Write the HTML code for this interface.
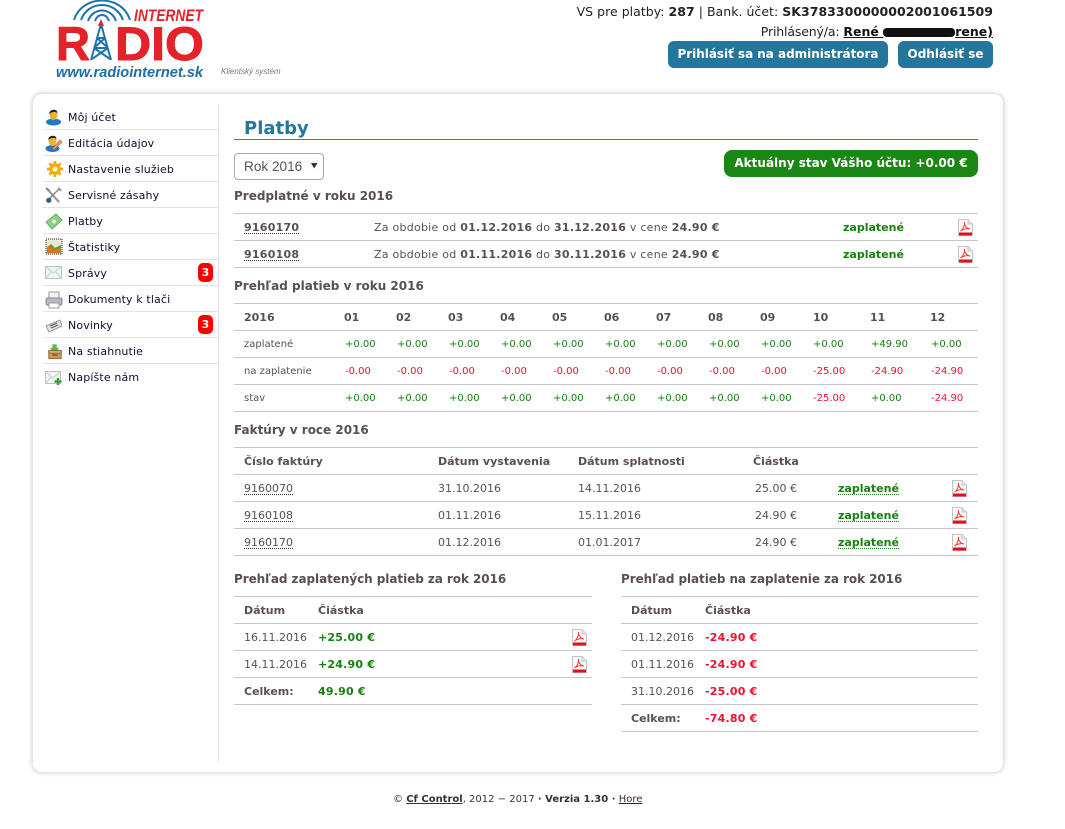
<!DOCTYPE html>
<html lang="sk"><head><meta charset="utf-8"><title>Platby</title>
<style>
html,body{margin:0;padding:0;background:#fff}
body{width:1065px;height:829px;position:relative;overflow:hidden;font-family:"DejaVu Sans","Liberation Sans",sans-serif;font-size:11px;color:#5a5050}
.t{position:absolute;white-space:nowrap;line-height:16px;margin-top:1px}
.b{font-weight:bold}
.l{position:absolute;height:1px;background:#c6c6c6}
.m{position:absolute;left:43px;width:175px;height:1px;background:#e2e2e2}
.n{color:#140a33;left:68px;letter-spacing:.13px}
.g{color:#16800f}.r{color:#f01030}
.h{font-weight:bold;font-size:12px;color:#5a5050;left:234px}
.s{font-size:10px}
.d{border-bottom:1px dotted #333;line-height:16px;height:13px;margin-top:0}
.w{letter-spacing:.25px}
.a{letter-spacing:.2px}
.ic{position:absolute;width:18px;height:18px}
.p{position:absolute;width:15px;height:17px;margin-top:1px}
.bd{position:absolute;left:198px;width:15px;height:19px;border-radius:5px;background:#f00;color:#fff;font-weight:bold;font-size:11px;text-align:center;line-height:19px}
.btn{position:absolute;top:41px;height:27px;background:#23769c;border-radius:6px;color:#fff;font-weight:bold;font-size:12px;text-align:center;line-height:27px}
</style></head><body>
<svg width="0" height="0" style="position:absolute"><defs>
<symbol id="pdf" viewBox="0 0 15 17"><path d="M.5 .5H10L14.500 5V16.500H.5Z" fill="#fafafa" stroke="#c4c4c4"/><path d="M10 .5V5H14.500" fill="#e4e4e4" stroke="#c4c4c4"/><rect x="1" y="13.500" width="13" height="3" fill="#e2101a"/><path d="M2.500 12C5 10.500 7 6 6.500 3C6 6 8.500 9.500 12 10C9 9 5 10 2.500 12Z" fill="none" stroke="#e8402f" stroke-width="1"/></symbol>
</defs></svg>

<!-- logo -->
<svg style="position:absolute;left:50px;top:0" width="170" height="84" viewBox="0 0 170 84">
<g fill="none" stroke="#1f74a8" stroke-width="2"><path d="M24 20C32-6 72-6 80 20"/><path d="M31 20C38 0 66 0 73 20"/><path d="M38 21C43 7 61 7 66 21"/><path d="M45 21C48 13 56 13 59 21"/></g>
<text x="84" y="21" font-family="Liberation Sans" font-size="16.500" font-weight="bold" font-style="italic" fill="#e42229" textLength="69" lengthAdjust="spacingAndGlyphs">INTERNET</text>
<text x="6" y="60" font-family="Liberation Sans" font-size="47" font-weight="bold" fill="#e42229" stroke="#e42229" stroke-width=".9" textLength="34" lengthAdjust="spacingAndGlyphs">R</text>
<text x="65" y="60" font-family="Liberation Sans" font-size="47" font-weight="bold" fill="#e42229" stroke="#e42229" stroke-width=".9" textLength="89" lengthAdjust="spacingAndGlyphs">DIO</text>
<g fill="none" stroke="#1f74a8" stroke-width="2"><path d="M51 24L41 60M51 24L61 60M47 38H55M44 48H58M47 38L58 48M55 38L44 48M42 59L58 48M60 59L44 48"/></g>
<path d="M51 19L48 26H54Z" fill="#e42229"/>
<text x="6" y="77" font-family="Liberation Sans" font-size="15" font-weight="bold" font-style="italic" fill="#1f6da3" textLength="147" lengthAdjust="spacingAndGlyphs">www.radiointernet.sk</text>
</svg>
<div class="t" style="left:221px;top:63px;font:italic 8px/16px 'Liberation Sans',sans-serif;color:#777">Klientský systém</div>

<!-- header -->
<div class="t" style="right:72px;top:3px;font-size:12.500px;color:#222;letter-spacing:.03px">VS pre platby: <b>287</b> | Bank. účet: <b>SK3783300000002001061509</b></div>
<div class="t" style="right:72px;top:23px;font-size:12.500px;color:#222"><span style="letter-spacing:-.15px">Prihlásený/a:</span> <b style="text-decoration:underline;color:#111">René&nbsp;<span style="display:inline-block;width:72px;height:9px;background:#111;border-radius:4px;vertical-align:-1px"></span>rene)</b></div>
<div class="btn" style="left:668px;width:220px;letter-spacing:-.03px">Prihlásiť sa na administrátora</div>
<div class="btn" style="left:898px;width:95px">Odhlásiť se</div>

<!-- card -->
<div style="position:absolute;left:33px;top:94px;width:970px;height:678px;background:#fff;border-radius:9px;box-shadow:0 0 5px 1px #cfcfcf"></div>
<div style="position:absolute;left:218px;top:104px;width:1px;height:658px;background:#e2e2e2"></div>

<!-- side menu -->
<div class="m" style="top:129px"></div><div class="m" style="top:155px"></div><div class="m" style="top:181px"></div><div class="m" style="top:207px"></div><div class="m" style="top:233px"></div><div class="m" style="top:259px"></div><div class="m" style="top:285px"></div><div class="m" style="top:311px"></div><div class="m" style="top:337px"></div><div class="m" style="top:363px"></div>

<svg class="ic" style="left:45px;top:108px" viewBox="0 0 18 18"><ellipse cx="8.500" cy="14" rx="7.500" ry="3.500" fill="#1f78c8"/><path d="M4.500 6C4.500 1 12.500 1 12.500 6C12.500 10 10.500 12 8.500 12C6.500 12 4.500 10 4.500 6Z" fill="#f0b030"/><path d="M4.500 6C3.500 1 12.500 0 12.500 5C9.500 3 6.500 4 4.500 6Z" fill="#222"/></svg>
<svg class="ic" style="left:45px;top:134px" viewBox="0 0 18 18"><ellipse cx="7.500" cy="14.500" rx="7" ry="3.500" fill="#1f78c8"/><path d="M3.500 6C3.500 1 11.500 1 11.500 6C11.500 10 9.500 12 7.500 12C5.500 12 3.500 10 3.500 6Z" fill="#f0b030"/><path d="M3.500 6C2.500 1 11.500 0 11.500 5C8.500 3 5.500 4 3.500 6Z" fill="#222"/><path d="M7 15L15 6L17 8L9 16Z" fill="#e8a060" stroke="#a86028" stroke-width=".6"/></svg>
<svg class="ic" style="left:46px;top:160px" viewBox="0 0 18 18"><circle cx="9" cy="9" r="4.200" fill="none" stroke="#f4a90c" stroke-width="3"/><path d="M9 1V17M1 9H17M3.400 3.400L14.600 14.600M14.600 3.400L3.400 14.600" stroke="#f4a90c" stroke-width="2.800"/><circle cx="9" cy="9" r="2.600" fill="#fff2c0"/></svg>
<svg class="ic" style="left:45px;top:187px;width:17px;height:17px" viewBox="0 0 18 18"><path d="M2 2L15 16" stroke="#999" stroke-width="2.200"/><path d="M15 2L4 13" stroke="#888" stroke-width="1.600"/><circle cx="4" cy="14" r="2.800" fill="#33608c"/><path d="M1 1L5 4M14 1L17 4" stroke="#888" stroke-width="1.800"/></svg>
<svg class="ic" style="left:45px;top:213px" viewBox="0 0 18 18"><path d="M1 9L11 1L17 7L7 16Z" fill="#8ccf88" stroke="#66ad62"/><circle cx="9" cy="8.500" r="2" fill="#d4f0cc"/></svg>
<svg class="ic" style="left:45px;top:238px" viewBox="0 0 18 18"><rect x="1" y="1" width="16" height="15" fill="#e8e8d8" stroke="#222" stroke-dasharray="1 1"/><path d="M2 15V9L6 6L10 10L16 7V15Z" fill="#d87818"/><path d="M6 6L10 10L16 7V10L10 12L5 9Z" fill="#6a9a30"/></svg>
<svg class="ic" style="left:45px;top:265px;height:16px" viewBox="0 0 18 16"><rect x=".5" y="1.500" width="16" height="12" fill="#f0f4f4" stroke="#bcc4c4"/><path d="M1 2L8.500 8L16 2M1 13L6 7M16 13L11 7" fill="none" stroke="#c4cccc"/></svg>
<svg class="ic" style="left:45px;top:291px" viewBox="0 0 18 18"><rect x="4" y="1" width="10" height="7" fill="#f4f4f4" stroke="#999"/><rect x="1" y="7" width="16" height="7" rx="1.500" fill="#b4bac4" stroke="#888"/><rect x="4" y="12" width="10" height="5" fill="#fff" stroke="#999"/></svg>
<svg class="ic" style="left:45px;top:318px;height:16px" viewBox="0 0 18 16"><path d="M1 8L15 2L17 8L4 14Z" fill="#e4e4e4" stroke="#999"/><path d="M5 8L12 5M6 10L13 7" stroke="#555" stroke-width="1.200"/></svg>
<svg class="ic" style="left:47px;top:343px;width:16px;height:17px" viewBox="0 0 18 18"><path d="M6 1H11V5H14L8.500 10L3 5H6Z" fill="#5cb848"/><rect x="2" y="8" width="14" height="9" fill="#cf9a5c" stroke="#8a6434"/><rect x="2" y="8" width="14" height="3" fill="#dcae74" stroke="#8a6434"/><rect x="6" y="12" width="6" height="2" fill="#8a6434"/></svg>
<svg class="ic" style="left:45px;top:370px;height:16px" viewBox="0 0 18 16"><rect x=".5" y="1.500" width="15" height="12" fill="#f0f4f4" stroke="#bcc4c4"/><path d="M1 2L8 8L15 2M1 13L6 7" fill="none" stroke="#c4cccc"/><path d="M13 8V15M9.500 11.500H16.500" stroke="#36a030" stroke-width="2.400"/></svg>

<div class="t n" style="top:109px">Môj účet</div>
<div class="t n" style="top:135px">Editácia údajov</div>
<div class="t n" style="top:161px">Nastavenie služieb</div>
<div class="t n" style="top:187px">Servisné zásahy</div>
<div class="t n" style="top:213px">Platby</div>
<div class="t n" style="top:239px">Štatistiky</div>
<div class="t n" style="top:265px">Správy</div>
<div class="t n" style="top:291px">Dokumenty k tlači</div>
<div class="t n" style="top:317px">Novinky</div>
<div class="t n" style="top:343px">Na stiahnutie</div>
<div class="t n" style="top:369px">Napíšte nám</div>
<div class="bd" style="top:263px">3</div>
<div class="bd" style="top:315px">3</div>

<!-- main -->
<div class="t b" style="left:244px;top:118px;font-size:18px;line-height:20px;color:#23769c">Platby</div>
<div class="l" style="left:234px;top:139px;width:744px;background:#4a7a90"></div>
<div style="position:absolute;left:234px;top:153px;width:88px;height:25px;border:1px solid #a8a8a8;border-radius:4px;background:#fff"></div>
<div class="t" style="left:244px;top:158px;font-family:'Liberation Sans',sans-serif;font-size:13.600px;color:#555">Rok 2016</div>
<svg style="position:absolute;left:311px;top:163px" width="7" height="6"><path d="M0 0H6.500L3.200 5.500Z" fill="#333"/></svg>
<div style="position:absolute;left:724px;top:150px;width:254px;height:27px;background:#1a8613;border-radius:8px;color:#fff;font-weight:bold;font-size:12px;text-align:center;line-height:27px">Aktuálny stav Vášho účtu: +0.00 €</div>

<div class="t h" style="top:187px">Predplatné v roku 2016</div>
<div class="l" style="left:234px;top:213px;width:744px"></div><div class="l" style="left:234px;top:240px;width:744px"></div><div class="l" style="left:234px;top:267px;width:744px"></div>
<div class="t b d w" style="left:244px;top:220px">9160170</div>
<div class="t w" style="left:374px;top:219px">Za obdobie od <b>01.12.2016</b> do <b>31.12.2016</b> v cene <b>24.90 €</b></div>
<div class="t b g" style="left:843px;top:219px">zaplatené</div>
<svg class="p" style="left:958px;top:218px"><use href="#pdf"/></svg>
<div class="t b d w" style="left:244px;top:247px">9160108</div>
<div class="t w" style="left:374px;top:246px">Za obdobie od <b>01.11.2016</b> do <b>30.11.2016</b> v cene <b>24.90 €</b></div>
<div class="t b g" style="left:843px;top:246px">zaplatené</div>
<svg class="p" style="left:958px;top:245px"><use href="#pdf"/></svg>

<div class="t h" style="top:277px">Prehľad platieb v roku 2016</div>
<div class="l" style="left:234px;top:303px;width:744px"></div><div class="l" style="left:234px;top:330px;width:744px"></div><div class="l" style="left:234px;top:357px;width:744px"></div><div class="l" style="left:234px;top:384px;width:744px"></div><div class="l" style="left:234px;top:411px;width:744px"></div>
<div class="t b" style="left:244px;top:309px">2016</div>
<div class="t b" style="left:344px;top:309px">01</div><div class="t b" style="left:396px;top:309px">02</div><div class="t b" style="left:448px;top:309px">03</div><div class="t b" style="left:500px;top:309px">04</div><div class="t b" style="left:552px;top:309px">05</div><div class="t b" style="left:604px;top:309px">06</div><div class="t b" style="left:656px;top:309px">07</div><div class="t b" style="left:708px;top:309px">08</div><div class="t b" style="left:760px;top:309px">09</div><div class="t b" style="left:813px;top:309px">10</div><div class="t b" style="left:870px;top:309px">11</div><div class="t b" style="left:930px;top:309px">12</div>

<div class="t s" style="left:244px;top:336px">zaplatené</div>
<div class="t s g" style="left:345px;top:336px">+0.00</div><div class="t s g" style="left:397px;top:336px">+0.00</div><div class="t s g" style="left:449px;top:336px">+0.00</div><div class="t s g" style="left:501px;top:336px">+0.00</div><div class="t s g" style="left:553px;top:336px">+0.00</div><div class="t s g" style="left:605px;top:336px">+0.00</div><div class="t s g" style="left:657px;top:336px">+0.00</div><div class="t s g" style="left:709px;top:336px">+0.00</div><div class="t s g" style="left:761px;top:336px">+0.00</div><div class="t s g" style="left:813px;top:336px">+0.00</div><div class="t s g" style="left:871px;top:336px">+49.90</div><div class="t s g" style="left:931px;top:336px">+0.00</div>

<div class="t s" style="left:244px;top:363px">na zaplatenie</div>
<div class="t s r" style="left:345px;top:363px">-0.00</div><div class="t s r" style="left:397px;top:363px">-0.00</div><div class="t s r" style="left:449px;top:363px">-0.00</div><div class="t s r" style="left:501px;top:363px">-0.00</div><div class="t s r" style="left:553px;top:363px">-0.00</div><div class="t s r" style="left:605px;top:363px">-0.00</div><div class="t s r" style="left:657px;top:363px">-0.00</div><div class="t s r" style="left:709px;top:363px">-0.00</div><div class="t s r" style="left:761px;top:363px">-0.00</div><div class="t s r" style="left:813px;top:363px">-25.00</div><div class="t s r" style="left:871px;top:363px">-24.90</div><div class="t s r" style="left:931px;top:363px">-24.90</div>

<div class="t s" style="left:244px;top:390px">stav</div>
<div class="t s g" style="left:345px;top:390px">+0.00</div><div class="t s g" style="left:397px;top:390px">+0.00</div><div class="t s g" style="left:449px;top:390px">+0.00</div><div class="t s g" style="left:501px;top:390px">+0.00</div><div class="t s g" style="left:553px;top:390px">+0.00</div><div class="t s g" style="left:605px;top:390px">+0.00</div><div class="t s g" style="left:657px;top:390px">+0.00</div><div class="t s g" style="left:709px;top:390px">+0.00</div><div class="t s g" style="left:761px;top:390px">+0.00</div><div class="t s r" style="left:813px;top:390px">-25.00</div><div class="t s g" style="left:871px;top:390px">+0.00</div><div class="t s r" style="left:931px;top:390px">-24.90</div>

<div class="t h" style="top:421px">Faktúry v roce 2016</div>
<div class="l" style="left:234px;top:447px;width:744px"></div><div class="l" style="left:234px;top:474px;width:744px"></div><div class="l" style="left:234px;top:501px;width:744px"></div><div class="l" style="left:234px;top:528px;width:744px"></div><div class="l" style="left:234px;top:555px;width:744px"></div>
<div class="t b" style="left:244px;top:453px">Číslo faktúry</div><div class="t b" style="left:438px;top:453px">Dátum vystavenia</div><div class="t b" style="left:578px;top:453px">Dátum splatnosti</div><div class="t b" style="left:753px;top:453px">Čiástka</div>

<div class="t d" style="left:244px;top:481px">9160070</div><div class="t" style="left:438px;top:480px">31.10.2016</div><div class="t" style="left:578px;top:480px">14.11.2016</div><div class="t" style="left:755px;top:480px">25.00 €</div><div class="t b g d" style="left:838px;top:481px;border-color:#16800f">zaplatené</div><svg class="p" style="left:952px;top:479px"><use href="#pdf"/></svg>
<div class="t d" style="left:244px;top:508px">9160108</div><div class="t" style="left:438px;top:507px">01.11.2016</div><div class="t" style="left:578px;top:507px">15.11.2016</div><div class="t" style="left:755px;top:507px">24.90 €</div><div class="t b g d" style="left:838px;top:508px;border-color:#16800f">zaplatené</div><svg class="p" style="left:952px;top:506px"><use href="#pdf"/></svg>
<div class="t d" style="left:244px;top:535px">9160170</div><div class="t" style="left:438px;top:534px">01.12.2016</div><div class="t" style="left:578px;top:534px">01.01.2017</div><div class="t" style="left:755px;top:534px">24.90 €</div><div class="t b g d" style="left:838px;top:535px;border-color:#16800f">zaplatené</div><svg class="p" style="left:952px;top:533px"><use href="#pdf"/></svg>

<div class="t h" style="top:570px;letter-spacing:-.06px">Prehľad zaplatených platieb za rok 2016</div>
<div class="l" style="left:234px;top:596px;width:358px"></div><div class="l" style="left:234px;top:623px;width:358px"></div><div class="l" style="left:234px;top:650px;width:358px"></div><div class="l" style="left:234px;top:677px;width:358px"></div><div class="l" style="left:234px;top:704px;width:358px"></div>
<div class="t b" style="left:244px;top:602px">Dátum</div><div class="t b" style="left:318px;top:602px">Čiástka</div>
<div class="t" style="left:244px;top:629px">16.11.2016</div><div class="t b g a" style="left:318px;top:629px">+25.00 €</div><svg class="p" style="left:572px;top:628px"><use href="#pdf"/></svg>
<div class="t" style="left:244px;top:656px">14.11.2016</div><div class="t b g a" style="left:318px;top:656px">+24.90 €</div><svg class="p" style="left:572px;top:655px"><use href="#pdf"/></svg>
<div class="t b" style="left:244px;top:683px">Celkem:</div><div class="t b g a" style="left:318px;top:683px">49.90 €</div>

<div class="t h" style="top:570px;left:621px;letter-spacing:-.07px">Prehľad platieb na zaplatenie za rok 2016</div>
<div class="l" style="left:621px;top:596px;width:357px"></div><div class="l" style="left:621px;top:623px;width:357px"></div><div class="l" style="left:621px;top:650px;width:357px"></div><div class="l" style="left:621px;top:677px;width:357px"></div><div class="l" style="left:621px;top:704px;width:357px"></div><div class="l" style="left:621px;top:731px;width:357px"></div>
<div class="t b" style="left:631px;top:602px">Dátum</div><div class="t b" style="left:705px;top:602px">Čiástka</div>
<div class="t" style="left:631px;top:629px">01.12.2016</div><div class="t b r a" style="left:705px;top:629px">-24.90 €</div>
<div class="t" style="left:631px;top:656px">01.11.2016</div><div class="t b r a" style="left:705px;top:656px">-24.90 €</div>
<div class="t" style="left:631px;top:683px">31.10.2016</div><div class="t b r a" style="left:705px;top:683px">-25.00 €</div>
<div class="t b" style="left:631px;top:710px">Celkem:</div><div class="t b r a" style="left:705px;top:710px">-74.80 €</div>

<div class="t" style="left:393px;top:791px;font-size:10px;color:#333">© <b style="text-decoration:underline">Cf Control</b>, 2012 − 2017 <b>· Verzia 1.30 ·</b> <span style="text-decoration:underline;color:#401a3a">Hore</span></div>
</body></html>
